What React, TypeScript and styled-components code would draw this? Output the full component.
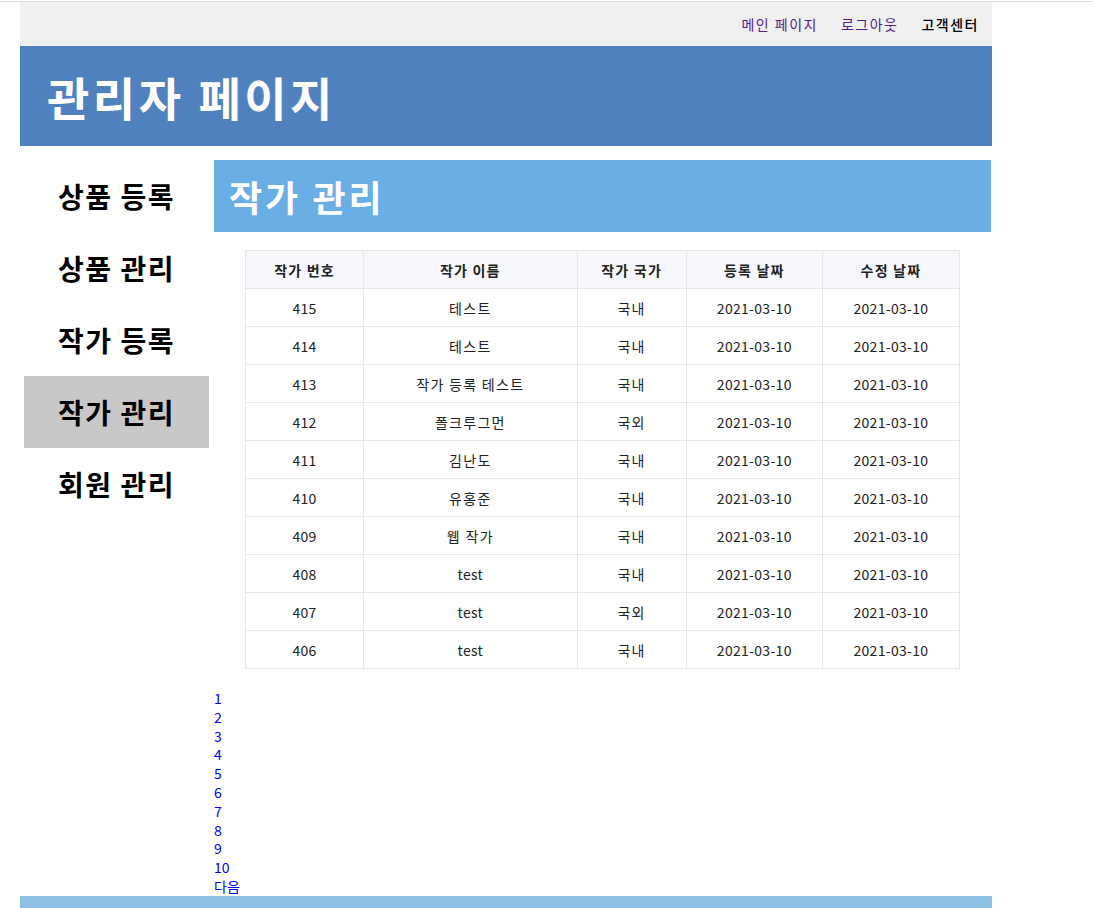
import React from 'react';
import styled, { createGlobalStyle } from 'styled-components';

const GlobalStyle = createGlobalStyle`
  body {
    margin: 0;
    font-family: "Noto Sans CJK KR", "Noto Sans", sans-serif;
    background: #fff;
  }
`;

const TopRule = styled.div`
  height: 1px;
  margin-top: 1px;
  background: #dcdcdc;
`;

const Page = styled.div`
  width: 972px;
  margin-left: 20px;
`;

const TopBar = styled.div`
  height: 44px;
  background: #f0f0f0;
  display: flex;
  justify-content: flex-end;
  align-items: center;
  gap: 23px;
  padding-right: 13px;
  font-size: 14px;
  letter-spacing: 1.5px;
`;

const TopLink = styled.a<{ $plain?: boolean }>`
  color: ${(p) => (p.$plain ? '#000' : '#551a8b')};
  font-weight: ${(p) => (p.$plain ? 500 : 400)};
  text-decoration: none;
  cursor: pointer;
`;

const Header = styled.header`
  height: 100px;
  background: #5081bf;
  display: flex;
  align-items: center;
  padding-left: 27px;
`;

const Title = styled.h1`
  margin: 0;
  color: #fff;
  font-size: 46px;
  font-weight: 700;
  letter-spacing: 3.5px;
`;

const Body = styled.div`
  display: flex;
  margin-top: 14px;
`;

const Sidebar = styled.nav`
  width: 185px;
  padding-left: 4px;
  display: flex;
  flex-direction: column;
`;

const MenuItem = styled.div<{ $active?: boolean }>`
  height: 72px;
  display: flex;
  align-items: center;
  justify-content: center;
  font-size: 28px;
  font-weight: 700;
  letter-spacing: 1.5px;
  color: #000;
  background: ${(p) => (p.$active ? '#c8c8c8' : 'transparent')};
  cursor: pointer;
`;

const Content = styled.main`
  width: 777px;
  margin-left: 5px;
`;

const SectionHead = styled.div`
  height: 72px;
  background: #6aaee6;
  display: flex;
  align-items: center;
  padding-left: 15px;
`;

const SectionTitle = styled.h2`
  margin: 0;
  color: #fff;
  font-size: 36px;
  font-weight: 700;
  letter-spacing: 3px;
`;

const Table = styled.table`
  width: 715px;
  margin: 18px 0 0 31px;
  border-collapse: collapse;
  font-size: 14px;
  color: #222;
`;

const Th = styled.th<{ $w: number }>`
  width: ${(p) => p.$w}px;
  height: 37px;
  padding: 0;
  background: #f7f8fc;
  border: 1px solid #e6e7ee;
  font-weight: 600;
  letter-spacing: 1.2px;
  text-align: center;
`;

const Td = styled.td<{ $ko?: boolean }>`
  height: 37px;
  padding: 0;
  border: 1px solid #e6e7ee;
  text-align: center;
  letter-spacing: ${(p) => (p.$ko ? '1.3px' : '0.3px')};
`;

const Pager = styled.ul`
  list-style: none;
  margin: 20px 0 0;
  padding: 0;
  font-size: 14px;
  line-height: 18.8px;
`;

const PageLink = styled.a`
  color: #0000ee;
  text-decoration: none;
  cursor: pointer;
`;

const Footer = styled.footer`
  height: 40px;
  background: #8fbfe2;
`;

const columns = [
  { label: '작가 번호', w: 118 },
  { label: '작가 이름', w: 214 },
  { label: '작가 국가', w: 109 },
  { label: '등록 날짜', w: 136 },
  { label: '수정 날짜', w: 137 },
];

const authors = [
  { id: 415, name: '테스트', country: '국내' },
  { id: 414, name: '테스트', country: '국내' },
  { id: 413, name: '작가 등록 테스트', country: '국내' },
  { id: 412, name: '폴크루그먼', country: '국외' },
  { id: 411, name: '김난도', country: '국내' },
  { id: 410, name: '유홍준', country: '국내' },
  { id: 409, name: '웹 작가', country: '국내' },
  { id: 408, name: 'test', country: '국내' },
  { id: 407, name: 'test', country: '국외' },
  { id: 406, name: 'test', country: '국내' },
];

const menu = ['상품 등록', '상품 관리', '작가 등록', '작가 관리', '회원 관리'];

export default function App() {
  return (
    <>
      <GlobalStyle />
      <TopRule />
      <Page>
        <TopBar>
          <TopLink>메인 페이지</TopLink>
          <TopLink>로그아웃</TopLink>
          <TopLink $plain>고객센터</TopLink>
        </TopBar>
        <Header>
          <Title>관리자 페이지</Title>
        </Header>
        <Body>
          <Sidebar>
            {menu.map((m) => (
              <MenuItem key={m} $active={m === '작가 관리'}>
                {m}
              </MenuItem>
            ))}
          </Sidebar>
          <Content>
            <SectionHead>
              <SectionTitle>작가 관리</SectionTitle>
            </SectionHead>
            <Table>
              <thead>
                <tr>
                  {columns.map((c) => (
                    <Th key={c.label} $w={c.w}>
                      {c.label}
                    </Th>
                  ))}
                </tr>
              </thead>
              <tbody>
                {authors.map((a) => (
                  <tr key={a.id}>
                    <Td>{a.id}</Td>
                    <Td $ko={a.name !== 'test'}>{a.name}</Td>
                    <Td $ko>{a.country}</Td>
                    <Td>2021-03-10</Td>
                    <Td>2021-03-10</Td>
                  </tr>
                ))}
              </tbody>
            </Table>
            <Pager>
              {[1, 2, 3, 4, 5, 6, 7, 8, 9, 10].map((n) => (
                <li key={n}>
                  <PageLink>{n}</PageLink>
                </li>
              ))}
              <li>
                <PageLink>다음</PageLink>
              </li>
            </Pager>
          </Content>
        </Body>
        <Footer />
      </Page>
    </>
  );
}
